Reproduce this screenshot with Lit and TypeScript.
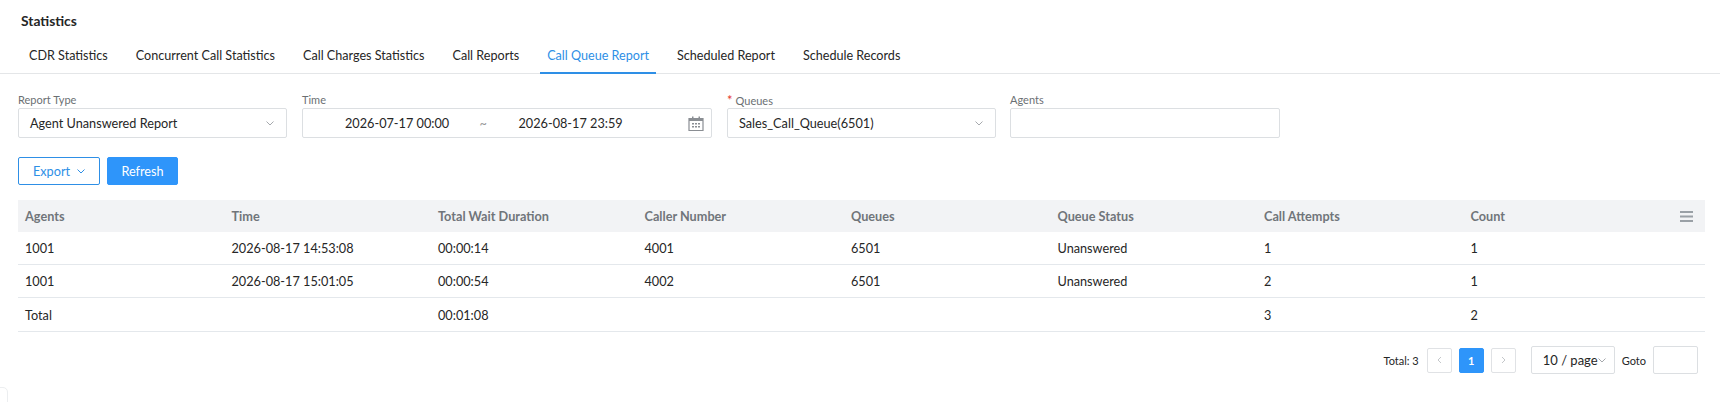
import { css, html, LitElement } from "lit";
import { customElement } from "lit/decorators.js";

const chevron = html`<svg class="chev" width="8" height="5" viewBox="0 0 8 5"><path d="M.5.5L4 4 7.500.5" fill="none" stroke="currentColor" stroke-width="1"/></svg>`;

const columns = ["Agents", "Time", "Total Wait Duration", "Caller Number", "Queues", "Queue Status", "Call Attempts", "Count"];
const rows = [
  ["1001", "2026-08-17 14:53:08", "00:00:14", "4001", "6501", "Unanswered", "1", "1"],
  ["1001", "2026-08-17 15:01:05", "00:00:54", "4002", "6501", "Unanswered", "2", "1"],
  ["Total", "", "00:01:08", "", "", "", "3", "2"],
];
const tabs = ["CDR Statistics", "Concurrent Call Statistics", "Call Charges Statistics", "Call Reports", "Call Queue Report", "Scheduled Report", "Schedule Records"];

@customElement("app-root")
export class AppRoot extends LitElement {
  static override styles = css`
    :host {
      display: block;
      position: relative;
      height: 402px;
      overflow: hidden;
      background: #fff;
      font-family: Lato, "Open Sans", sans-serif;
      font-size: 12.7px;
      color: #262626;
    }
    .title {
      padding: 12px 0 0 21px;
      height: 28px;
      line-height: 17px;
      font-size: 13.8px;
      font-weight: 700;
    }
    .tabs {
      display: flex;
      gap: 14px;
      height: 33px;
      padding-left: 22px;
      border-bottom: 1px solid #e4e6e8;
      font-size: 12.6px;
    }
    .tab {
      padding: 0 7px;
      line-height: 31px;
      height: 33px;
      box-sizing: border-box;
    }
    .tab.active {
      height: 34px;
      margin-bottom: -1px;
      color: #2e8fe6;
      border-bottom: 2px solid #2e8fe6;
    }
    .filters {
      display: flex;
      gap: 15px;
      padding: 18px 0 0 18px;
    }
    .field {
      display: flex;
      flex-direction: column;
    }
    .field label {
      height: 16px;
      line-height: 16px;
      font-size: 11px;
      color: #6b6f73;
    }
    .req {
      color: #e5392f;
      font-size: 13px;
      margin-right: 3px;
    }
    .box {
      display: flex;
      align-items: center;
      box-sizing: border-box;
      height: 30px;
      border: 1px solid #dcdfe2;
      border-radius: 2px;
      padding: 0 12px 0 11px;
      color: #262626;
    }
    .box span.grow {
      flex: 1;
    }
    .chev {
      color: #a6a9ad;
      flex: none;
    }
    .f1 { width: 269px; }
    .f2 { width: 410px; }
    .f3 { width: 269px; }
    .f4 { width: 270px; margin-left: -1px; }
    .range {
      padding: 0 7px 0 42px;
    }
    .range .to {
      width: 70.500px;
      text-align: center;
      color: #999;
    }
    .range .ends {
      width: 103px;
      white-space: nowrap;
    }
    .range svg {
      margin-left: auto;
    }
    .actions {
      display: flex;
      gap: 7px;
      padding: 19px 0 15px 18px;
    }
    .btn {
      display: flex;
      align-items: center;
      justify-content: center;
      box-sizing: border-box;
      height: 28px;
      border-radius: 2px;
      border: 1px solid #2e8fe6;
      color: #2e8fe6;
    }
    .btn.export {
      width: 82px;
      gap: 7px;
    }
    .btn.export .chev {
      color: #2e8fe6;
    }
    .btn.refresh {
      width: 71px;
      background: #2e95fa;
      border-color: #2e95fa;
      color: #fff;
    }
    .table {
      margin: 0 15px 0 18px;
    }
    .row {
      display: grid;
      grid-template-columns: repeat(8, 206.5px) 1fr;
      height: 33px;
      align-items: center;
      border-bottom: 1px solid #e4e8ec;
      box-sizing: border-box;
    }
    .row > div {
      padding-left: 7px;
    }
    .row.head {
      height: 32px;
      background: #f2f3f5;
      border-bottom: none;
      font-weight: 700;
      color: #70757a;
    }
    .row.last {
      height: 34px;
    }
    .head .menu {
      display: flex;
      justify-content: flex-end;
      padding: 0 12px 0 0;
    }
    .pager {
      display: flex;
      align-items: center;
      justify-content: flex-end;
      padding: 14px 22px 0 0;
      font-size: 11px;
    }
    .pg {
      display: flex;
      align-items: center;
      justify-content: center;
      box-sizing: border-box;
      width: 25px;
      height: 25px;
      border: 1px solid #e0e2e5;
      border-radius: 2px;
      color: #c4c7ca;
    }
    .pg.on {
      background: #2e95fa;
      border-color: #2e95fa;
      color: #fff;
      font-weight: 700;
      margin: 0 7px;
    }
    .total {
      margin-right: 8px;
    }
    .size {
      display: flex;
      align-items: center;
      justify-content: space-between;
      box-sizing: border-box;
      width: 84px;
      height: 28px;
      margin: 0 7px 0 15px;
      padding: 0 9px 0 11px;
      border: 1px solid #dcdfe2;
      border-radius: 2px;
      font-size: 13px;
      white-space: nowrap;
    }
    .goto {
      width: 45px;
      height: 28px;
      margin-left: 7px;
      box-sizing: border-box;
      border: 1px solid #dcdfe2;
      border-radius: 2px;
    }
    .corner {
      position: absolute;
      left: -12px;
      top: 387px;
      width: 18px;
      height: 30px;
      border: 1px solid #eceef0;
      border-radius: 5px;
    }
  `;

  override render() {
    return html`
      <div class="title">Statistics</div>
      <div class="tabs">
        ${tabs.map((t) => html`<div class="tab ${t === "Call Queue Report" ? "active" : ""}">${t}</div>`)}
      </div>
      <div class="filters">
        <div class="field f1">
          <label>Report Type</label>
          <div class="box"><span class="grow">Agent Unanswered Report</span>${chevron}</div>
        </div>
        <div class="field f2">
          <label>Time</label>
          <div class="box range">
            <span class="ends">2026-07-17 00:00</span>
            <span class="to">~</span>
            <span class="ends">2026-08-17 23:59</span>
            <svg width="16" height="15" viewBox="0 0 16 15">
              <path d="M1 2.500h14v12H1z" fill="none" stroke="#8a8e93" stroke-width="1.2"/>
              <path d="M1 2.500h14V5H1zM4 .5h1.500v3H4zM10.500.5H12v3h-1.500z" fill="#8a8e93"/>
              <path d="M4 7h2v1.500H4zM7 7h2v1.500H7zM10 7h2v1.500h-2zM4 10h2v1.500H4zM7 10h2v1.500H7zM10 10h2v1.500h-2z" fill="#8a8e93"/>
            </svg>
          </div>
        </div>
        <div class="field f3">
          <label><span class="req">*</span>Queues</label>
          <div class="box"><span class="grow">Sales_Call_Queue(6501)</span>${chevron}</div>
        </div>
        <div class="field f4">
          <label>Agents</label>
          <div class="box"></div>
        </div>
      </div>
      <div class="actions">
        <div class="btn export">Export ${chevron}</div>
        <div class="btn refresh">Refresh</div>
      </div>
      <div class="table">
        <div class="row head">
          ${columns.map((c) => html`<div>${c}</div>`)}
          <div class="menu">
            <svg width="13" height="11" viewBox="0 0 13 11"><path d="M0 1h13M0 5.500h13M0 10h13" stroke="#9aa0a6" stroke-width="2"/></svg>
          </div>
        </div>
        ${rows.map(
          (r, i) => html`<div class="row ${i === 2 ? "last" : ""}">
            ${r.map((c) => html`<div>${c}</div>`)}
          </div>`,
        )}
      </div>
      <div class="pager">
        <span class="total">Total: 3</span>
        <div class="pg"><svg width="5" height="8" viewBox="0 0 5 8"><path d="M4 1L1 4l3 3" fill="none" stroke="currentColor"/></svg></div>
        <div class="pg on">1</div>
        <div class="pg"><svg width="5" height="8" viewBox="0 0 5 8"><path d="M1 1l3 3-3 3" fill="none" stroke="currentColor"/></svg></div>
        <div class="size">10 / page ${chevron}</div>
        <span>Goto</span>
        <div class="goto"></div>
      </div>
      <div class="corner"></div>
    `;
  }
}
